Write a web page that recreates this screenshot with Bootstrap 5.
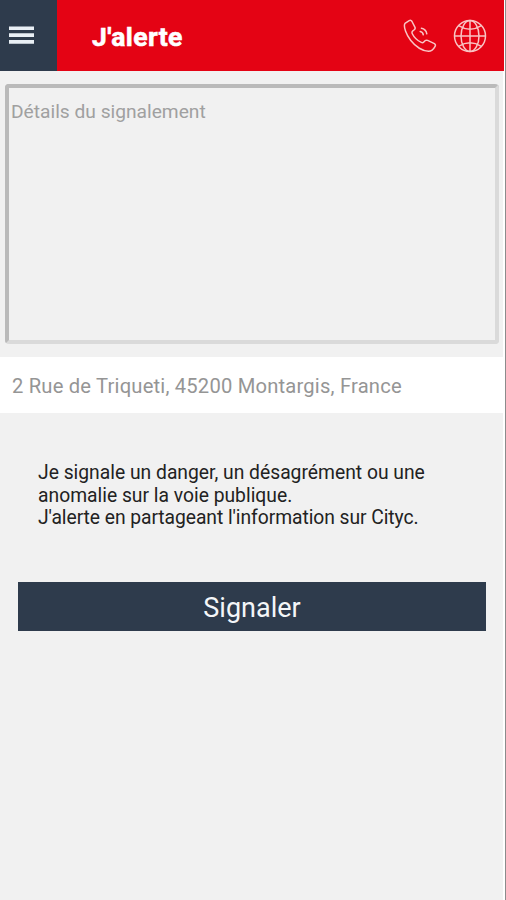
<!DOCTYPE html>
<html lang="fr">
<head>
<meta charset="utf-8">
<meta name="viewport" content="width=device-width, initial-scale=1">
<title>J'alerte</title>
<link href="https://cdn.jsdelivr.net/npm/bootstrap@5.3.0/dist/css/bootstrap.min.css" rel="stylesheet">
<style>
body { font-family: Roboto, "Liberation Sans", sans-serif; background: #f1f1f1; color: #222; }
.screen { border-right: 1px solid #8c8c8c; background: linear-gradient(90deg, #f1f1f1 503px, #fff 503px); }
.topbar { height: 71px; width: 504px; background: #e40314; }
.menu-btn, .menu-btn:hover { width: 57px; height: 71px; background: #2e3b4c; padding: 0 0 0 9px; }
.page-title { font-size: 26.5px; font-weight: 700; line-height: 30px; margin-left: 35px; padding-top: 2px; letter-spacing: .4px; -webkit-text-stroke: .6px #fff; }
.topbar-icons { gap: 16px; margin-right: 17px; }
.details { width: 494px; height: 260px; margin: 13px 0 0 5px; padding: 14px 2px; border: 4px solid; border-color: #bababa #dadada #dadada #bababa; border-radius: 4px; background: transparent; font-size: 19.2px; line-height: 20px; resize: none; outline: 0; }
.details::placeholder { color: #a0a0a0; opacity: 1; }
.address { height: 56px; margin-top: 13px; width: 504px; padding: 2px 12px 0; color: #959595; font-size: 20.2px; letter-spacing: .19px; }
.intro { margin: 49px 38px 0; font-size: 19.3px; line-height: 22.7px; }
.intro-last { letter-spacing: -.06px; }
.send { width: 468px; height: 49px; margin: 52px 0 0 18px; background: #2e3b4c; color: #f4f6f8; font-size: 27px; line-height: 30px; padding: 3px 0 0; }
.send:hover { background: #2e3b4c; color: #fff; }
</style>
<script src="https://cdn.jsdelivr.net/npm/bootstrap@5.3.0/dist/js/bootstrap.bundle.min.js"></script>
</head>
<body>
<div class="screen vh-100 overflow-hidden">
  <header class="topbar d-flex align-items-center text-white">
    <button class="menu-btn btn border-0 rounded-0 d-flex align-items-center" type="button" aria-label="Menu">
      <svg width="25" height="19" viewBox="0 0 25 19" fill="#e9eff5"><path d="M0 .5h25v3.6H0zM0 7.3h25v3.6H0zM0 14.1h25v3.6H0z"/></svg>
    </button>
    <h1 class="page-title mb-0">J'alerte</h1>
    <div class="topbar-icons d-flex align-items-center ms-auto">
      <svg width="34" height="34" viewBox="0 0 34 34" fill="none" stroke="#f9c4c4" stroke-width="1.5" stroke-linecap="round" stroke-linejoin="round">
        <path d="M2 4.4L6.2 1.6Q8 .8 9 2.5L12 8.3Q12.6 9.8 11 11L9.5 12.2Q8.6 13.2 9.3 14.7C11 18.3 14.5 21.5 18.3 23.4Q19.8 24.2 20.8 23L22 21.8Q23.1 20.8 24.6 21.4L31.4 24.6Q33 25.6 32.1 27.3Q29.5 32.2 25.5 32.3C20 32.3 12.5 27.8 7.6 21.3C3.5 15.8 0 7.5 2 4.4z"/>
        <path d="M17.2 12.6q2.6.5 3.1 3.2M18.4 9.2q4.6.9 5.4 5.6"/>
      </svg>
      <svg width="34" height="34" viewBox="0 0 34 34" fill="none" stroke="#f9c4c4" stroke-width="1.5">
        <circle cx="17" cy="17" r="15.5"/><ellipse cx="17" cy="17" rx="9" ry="15.5"/>
        <path d="M17 1.5v31M1.5 17h31M5.6 6.6Q17 13.8 28.4 6.6M5.6 27.4Q17 20.2 28.4 27.4"/>
      </svg>
    </div>
  </header>
  <main>
    <textarea class="details d-block" placeholder="Détails du signalement"></textarea>
    <div class="address d-flex align-items-center bg-white text-nowrap">2 Rue de Triqueti, 45200 Montargis, France</div>
    <p class="intro text-nowrap">Je signale un danger, un désagrément ou une<br>anomalie sur la voie publique.<br><span class="intro-last">J'alerte en partageant l'information sur Cityc.</span></p>
    <button class="send btn border-0 rounded-0 d-flex align-items-center justify-content-center" type="button">Signaler</button>
  </main>
</div>
</body>
</html>
